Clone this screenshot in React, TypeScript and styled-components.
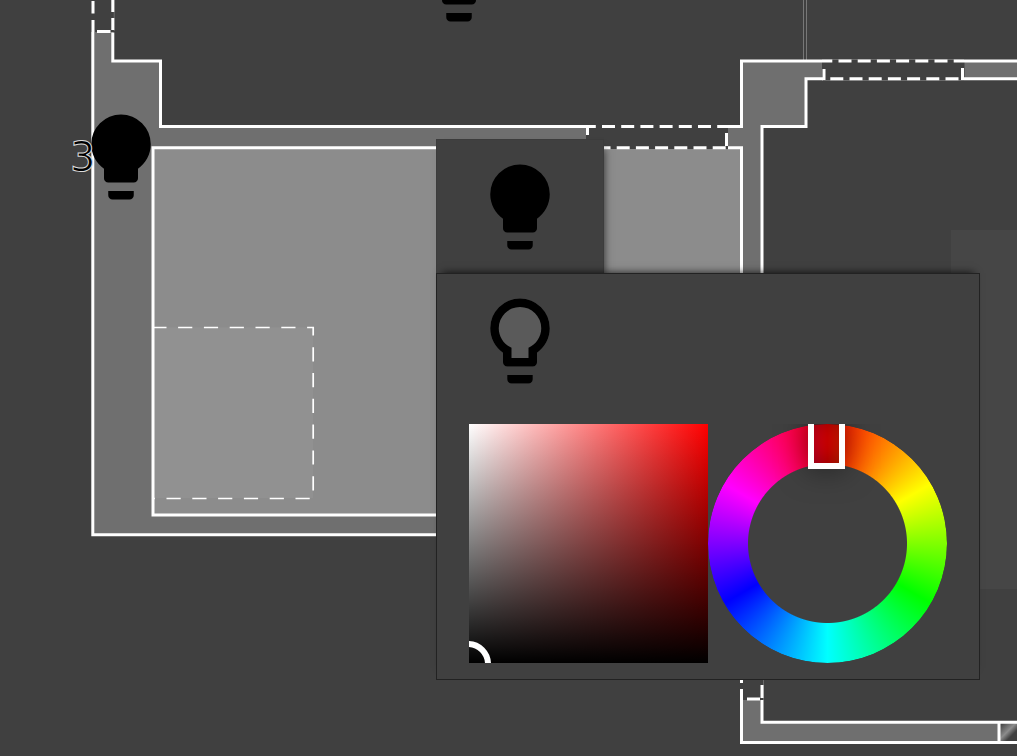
import React from "react";
import styled, { createGlobalStyle } from "styled-components";

const SOLID_BULB =
  "M12,2A7,7 0 0,0 5,9C5,11.38 6.19,13.47 8,14.74V17A1,1 0 0,0 9,18H15A1,1 0 0,0 16,17V14.74C17.81,13.47 19,11.38 19,9A7,7 0 0,0 12,2M9,21A1,1 0 0,0 10,22H14A1,1 0 0,0 15,21V20H9V21Z";
const OUTLINE_BULB =
  "M12,2A7,7 0 0,1 19,9C19,11.38 17.81,13.47 16,14.74V17A1,1 0 0,1 15,18H9A1,1 0 0,1 8,17V14.74C6.19,13.47 5,11.38 5,9A7,7 0 0,1 12,2M9,21V20H15V21A1,1 0 0,1 14,22H10A1,1 0 0,1 9,21M12,4A5,5 0 0,0 7,9C7,11.05 8.23,12.81 10,13.58V16H14V13.58C15.77,12.81 17,11.05 17,9A5,5 0 0,0 12,4Z";

const GlobalStyle = createGlobalStyle`
  * { box-sizing: border-box; }
  body { margin: 0; background: #404040; font-family: "DejaVu Sans", sans-serif; overflow: hidden; }
`;

const Stage = styled.main`
  position: relative;
  min-height: 100vh;
  overflow: hidden;
  background: #404040;
`;

const PlanDrawing = styled.svg`
  position: absolute;
  left: 0;
  top: 0;
  width: 1600px;
  height: 900px;
`;

const Marker = styled.button<{ $x: number; $y: number }>`
  position: absolute;
  left: ${(p) => p.$x}px;
  top: ${(p) => p.$y}px;
  padding: 0;
  border: 0;
  background: none;
  cursor: pointer;
`;

const Count = styled.span`
  position: absolute;
  left: 0;
  top: 27px;
  font: 400 40px/48px "DejaVu Sans", sans-serif;
  color: #000;
  -webkit-text-stroke: 1px #ddd;
`;

const BulbSvg = styled.svg`
  display: block;
  width: 102px;
  height: 102px;
  fill: #000;
`;

const Menu = styled.div`
  position: absolute;
  left: 437px;
  top: 140px;
  display: flex;
  flex-direction: column;
  align-items: flex-start;
`;

const Panel = styled.section`
  padding: 16px 32px;
  background: #404040;
  box-shadow: 0 0 0 1px #3c3c3c, 4px 6px 8px -3px rgba(0, 0, 0, 0.7);
`;

const ColorPanel = styled(Panel)`
  position: relative;
  display: flex;
  flex-direction: column;
  gap: 32px;
  box-shadow: 0 0 0 1px #222, 0 -6px 8px -5px rgba(0, 0, 0, 0.8);
`;

const IconButton = styled.button`
  display: block;
  align-self: flex-start;
  padding: 0;
  border: 0;
  background: none;
  cursor: pointer;
`;

const Pickers = styled.div`
  display: flex;
`;

const Picker = styled.label`
  position: relative;
  width: 239px;
  height: 239px;
  overflow: hidden;
  cursor: pointer;
`;

const Shade = styled(Picker)`
  background: linear-gradient(to top, #000, transparent), linear-gradient(to right, #fff, #f00);
`;

const ShadeHandle = styled.span`
  position: absolute;
  left: -24px;
  bottom: -24px;
  width: 46px;
  height: 46px;
  border: 6px solid #fff;
  border-radius: 50%;
`;

const Hues = styled.div`
  width: 100%;
  height: 100%;
  border-radius: 50%;
  background: conic-gradient(#f00, #ff0, #0f0, #0ff, #00f, #f0f, #f00);
  mask: radial-gradient(circle, transparent 79px, #000 80px);
`;

const HueHandle = styled.span`
  position: absolute;
  left: 100px;
  top: -11px;
  width: 37px;
  height: 56px;
  border: 6px solid #fff;
  box-shadow: 0 0 30px rgba(0, 0, 0, 0.5), inset 0 0 30px rgba(0, 0, 0, 0.5);
`;

const RangeInput = styled.input`
  position: absolute;
  inset: 0;
  width: 100%;
  height: 100%;
  margin: 0;
  opacity: 0;
  cursor: pointer;
`;

function Bulb({ outline = false }: { outline?: boolean }) {
  return (
    <BulbSvg viewBox="0 0 24 24" aria-hidden="true">
      {outline && <path d={SOLID_BULB} fill="#5a5a5a" />}
      <path d={outline ? OUTLINE_BULB : SOLID_BULB} />
    </BulbSvg>
  );
}

function FloorPlan() {
  return (
    <PlanDrawing viewBox="0 0 1600 900" fill="none" stroke="#fff" strokeWidth="3" aria-hidden="true">
      <defs>
        <linearGradient id="glass" x1="1000" y1="724" x2="1018" y2="742" gradientUnits="userSpaceOnUse">
          <stop offset="0" stopColor="#404040" />
          <stop offset="0.42" stopColor="#8c8c8c" />
          <stop offset="0.65" stopColor="#404040" />
          <stop offset="1" stopColor="#404040" />
        </linearGradient>
      </defs>

      <rect x="951" y="230" width="650" height="359" fill="#464646" stroke="none" />
      <path d="M803.500 0V60M806.500 0V60" stroke="#777" strokeWidth="1" />

      {/* walls */}
      <g fill="#6f6f6f" stroke="none">
        <path d="M93 32H113V61H160.500V126.500H741.500V61H1600V79H806V126.500H762V535H93Z" />
        <path d="M741.500 700H762V722H1600V742.500H741.500Z" />
      </g>
      <rect x="153" y="148" width="588.500" height="367" fill="#8c8c8c" stroke="none" />
      <rect x="154" y="327.500" width="159" height="170.500" fill="#919191" stroke="none" />

      {/* openings */}
      <g fill="#404040" stroke="none">
        <rect x="586" y="126" width="142" height="23" />
        <rect x="822" y="59.500" width="142.500" height="21" />
        <rect x="1000" y="722" width="600" height="20" fill="url(#glass)" />
      </g>
      <path d="M822 59.500H964M822 80.500H964M114.200 0V31M763.500 680V700" stroke="#6a6a6a" strokeWidth="1" />

      {/* wall outlines */}
      <path d="M92.800 32V534.800H741.500M112.800 32.500V61H160.500V126.500H588" />
      <path d="M602 147.800H153V515H741.500V147.800H728" />
      <path d="M728 126.500H741.500V61H823M823 78.800H806V126.500H762V680" />
      <path d="M964 61H1600M964 78.800H1600" />
      <path d="M741.500 700V742.500H1600M762 700V722.300H1600M999 722V742" />

      {/* dashed openings */}
      <path d="M93 1V13.500M93 20V32M112.800 0V12M112.800 18V30M97 31.500H110.500" />
      <path d="M586 126.500H728" strokeDasharray="13 6.200" strokeDashoffset="3.200" />
      <path d="M587.500 126V135M726.500 133V146" />
      <path d="M597.500 147.800H727" strokeDasharray="13 6.200" />
      <path d="M823 61H964" strokeDasharray="13 6.200" strokeDashoffset="3.700" />
      <path d="M830.300 78.800H960" strokeDasharray="13 6.200" />
      <path d="M824 69V80M962.500 68V80" />
      <path d="M741.500 679V683M741.500 689V701M762 685V698M747 699H760" />
      <path d="M154 327.500H313.200V498.500H154" strokeWidth="1.700" strokeDasharray="14.200 11.600" strokeDashoffset="1.700" />
    </PlanDrawing>
  );
}

export default function App() {
  return (
    <>
      <GlobalStyle />
      <Stage>
        <FloorPlan />
        <Marker $x={408} $y={-72} aria-label="Light">
          <Bulb />
        </Marker>
        <Marker $x={70} $y={106} aria-label="3 lights">
          <Bulb />
          <Count>3</Count>
        </Marker>
        <Menu>
          <Panel>
            <IconButton aria-label="Light off">
              <Bulb />
            </IconButton>
          </Panel>
          <ColorPanel>
            <IconButton aria-label="Light color">
              <Bulb outline />
            </IconButton>
            <Pickers>
              <Shade>
                <ShadeHandle />
                <RangeInput type="range" min={0} max={100} defaultValue={0} aria-label="Brightness" />
              </Shade>
              <Picker>
                <Hues />
                <HueHandle />
                <RangeInput type="range" min={0} max={360} defaultValue={0} aria-label="Hue" />
              </Picker>
            </Pickers>
          </ColorPanel>
        </Menu>
      </Stage>
    </>
  );
}
